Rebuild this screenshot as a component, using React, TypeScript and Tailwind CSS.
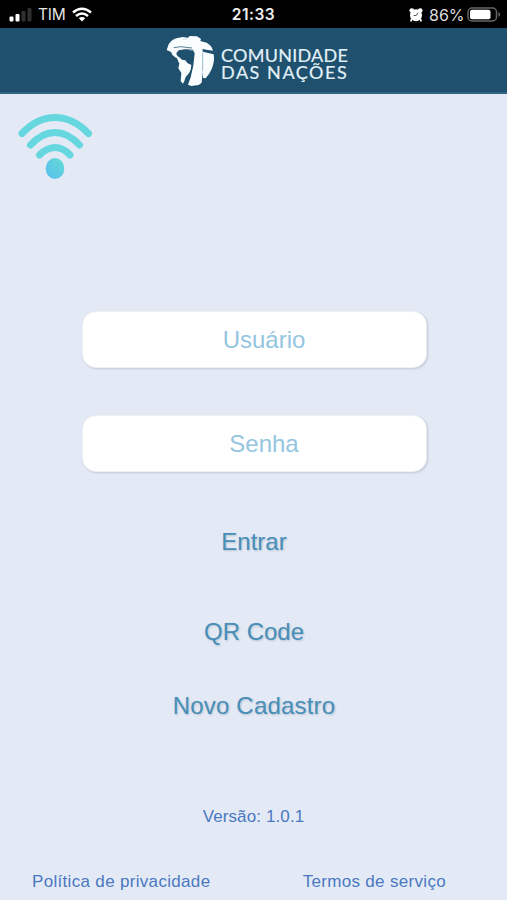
import React from "react";

function Signal() {
  return (
    <svg className="ml-[9px] h-4 w-[24px] shrink-0" viewBox="0 0 24 16">
      <rect x="0.5" y="9.5" width="4" height="5" rx="1" fill="#fff" />
      <rect x="6.5" y="7" width="4" height="7.5" rx="1" fill="#fff" />
      <rect x="12.5" y="4" width="4" height="10.5" rx="1" fill="#303030" />
      <rect x="18.5" y="1" width="4" height="13.5" rx="1" fill="#303030" />
    </svg>
  );
}

function StatusBar() {
  return (
    <header className="grid h-7 shrink-0 grid-cols-[1fr_60px_1fr] items-center bg-black pt-[2px] font-['Inter',sans-serif] text-white">
      <div className="flex items-center">
        <Signal />
        <span className="ml-[5px] w-[28px] text-[15.5px] leading-5 tracking-[-0.2px] text-[#e4e4e4]">TIM</span>
        <svg className="ml-[6px] h-4 w-5" viewBox="0 0 20 16" fill="none" stroke="#fff" strokeWidth="2.5">
          <path d="M1 5.5Q10-2 19 5.5" />
          <path d="M4 9Q10 4 16 9" />
          <path d="M6.8 11.2Q10 8.8 13.2 11.2L10 14.5Z" fill="#fff" stroke="none" />
        </svg>
      </div>
      <span className="whitespace-nowrap text-center text-[15.5px] font-semibold leading-5 tracking-[0.5px] text-[#eeeeee]">21:33</span>
      <div className="flex items-center justify-end">
        <svg className="mr-[6px] h-[14px] w-[14px]" viewBox="0 0 14 14">
          <circle cx="2.8" cy="2.6" r="2.4" fill="#fff" />
          <circle cx="11.2" cy="2.6" r="2.4" fill="#fff" />
          <path d="m2.7 11-1 2.3M11.3 11l1 2.3" stroke="#fff" strokeWidth="1.8" />
          <circle cx="7" cy="7.2" r="6" fill="#fff" />
          <path d="M9 4.6 7.2 7.5H4.6" fill="none" stroke="#555" strokeWidth="1" />
        </svg>
        <span className="w-[36px] whitespace-nowrap text-[16px] leading-5 text-[#dddddd]">86%</span>
        <svg className="ml-[2px] mr-[6px] h-4 w-[34px]" viewBox="0 0 34 16">
          <rect x="1" y="1" width="28.5" height="13" rx="4" fill="none" stroke="#666" strokeWidth="1.5" />
          <rect x="3" y="2.8" width="20.5" height="9.4" rx="2" fill="#fff" />
          <path d="M31.5 5q3 2.5 0 5Z" fill="#777" />
        </svg>
      </div>
    </header>
  );
}

function Globe() {
  return (
    <svg className="h-[51px] w-[50px] shrink-0" viewBox="12 9 150 153" fill="#fafdfe">
      <path d="M14 54 20 37Q28 24 43 19L62 15 78 17 83 12 105 13 117 21 115 27 134 32Q150 41 153 56L122 52 122 59 155 67Q159 88 149 111 143 125 131 139L123 138 122 119 119 152 110 159 88 162 78 158 86 136 94 101 98 64 94 56 73 53 53 55 45 60 43 66 50 78 42 77 32 70 27 60Z" />
      <path d="m42 72 8 2 10 9 10 2 6 8 12 6-2 14-5 11-10 11-4 12-4 8-7-7 2-25-9-14 3-14Z" />
      <path d="M35 47 56 44 90 48M49 56l25-4 20 3M121 53l33 7" fill="none" stroke="#1f506e" strokeWidth="2.2" />
      <path d="M122 62V118" fill="none" stroke="#6c99b2" strokeWidth="2" />
      <path d="M62 21h14" stroke="#b9d4e1" strokeWidth="2" />
    </svg>
  );
}

function Brand() {
  return (
    <div className="flex h-[66px] shrink-0 items-start border-b-2 border-[#326581] bg-[#1f506e] pl-[166px] pt-[7px] text-[#e2f1f7]">
      <Globe />
      <div className="ml-[5px] mt-[12px] whitespace-nowrap font-['Lato',sans-serif] text-[18px] leading-[17px] [-webkit-text-stroke:0.2px_#e2f1f7]">
        <div className="tracking-[0.25px]">COMUNIDADE</div>
        <div className="tracking-[1.55px]">DAS NAÇÕES</div>
      </div>
    </div>
  );
}

function Connection() {
  return (
    <svg className="ml-[17px] mt-[18px] h-[70px] w-[77px]" viewBox="0 0 77 70" fill="none" strokeLinecap="round">
      <defs>
        <linearGradient id="dot" x1="1" y1="0" x2="0" y2="1">
          <stop stopColor="#65dcd3" />
          <stop offset="1" stopColor="#57bdf0" />
        </linearGradient>
      </defs>
      <g stroke="#66d7df" strokeWidth="7">
        <path d="M5 21.5Q20 5.5 38 5.5T71.5 21.5" />
        <path d="M13.5 33Q25 20.5 38 20.5T62.5 33" />
        <path d="M22.5 43Q30 35.5 38 35.5T53 43" />
      </g>
      <ellipse cx="38" cy="56.5" rx="9.3" ry="10.5" fill="url(#dot)" />
    </svg>
  );
}

const field =
  "block h-[57px] w-[345px] rounded-[14px] border border-[#eef0f4] bg-white pl-5 text-center text-[24px] text-[#9bc9e2] shadow-[1px_1px_2px_rgba(100,105,125,0.25)] outline-none placeholder:text-[#94c5df] placeholder:opacity-100";
const action =
  "block h-8 whitespace-nowrap text-[24px] leading-8 text-[#478eb8] [text-shadow:1px_1px_2px_rgba(80,90,110,0.28)]";

export default function App() {
  return (
    <div className="flex h-[900px] w-[507px] flex-col overflow-hidden bg-[#e3eaf5] font-['Liberation_Sans',Arial,sans-serif]">
      <StatusBar />
      <Brand />
      <main className="flex min-h-0 flex-1 flex-col">
        <div className="h-[217px] shrink-0">
          <Connection />
        </div>
        <form className="flex flex-col items-center pl-px" onSubmit={(e) => e.preventDefault()}>
          <input aria-label="Usuário" placeholder="Usuário" className={field} />
          <input type="password" aria-label="Senha" placeholder="Senha" className={field + " mt-[47px]"} />
          <button type="submit" className={action + " mt-[54px]"}>Entrar</button>
          <button type="button" className={action + " mt-[58px]"}>QR Code</button>
          <button type="button" className={action + " mt-[42px] tracking-[0.2px]"}>Novo Cadastro</button>
        </form>
        <footer className="mt-[85px] text-[17px] leading-5 tracking-[0.32px] text-[#4a78c2]">
          <p className="text-center tracking-[0.12px]">Versão: 1.0.1</p>
          <div className="mt-[45px] flex justify-between pl-8 pr-[61px]">
            <a href="#privacidade">Política de privacidade</a>
            <a href="#termos">Termos de serviço</a>
          </div>
        </footer>
      </main>
    </div>
  );
}
